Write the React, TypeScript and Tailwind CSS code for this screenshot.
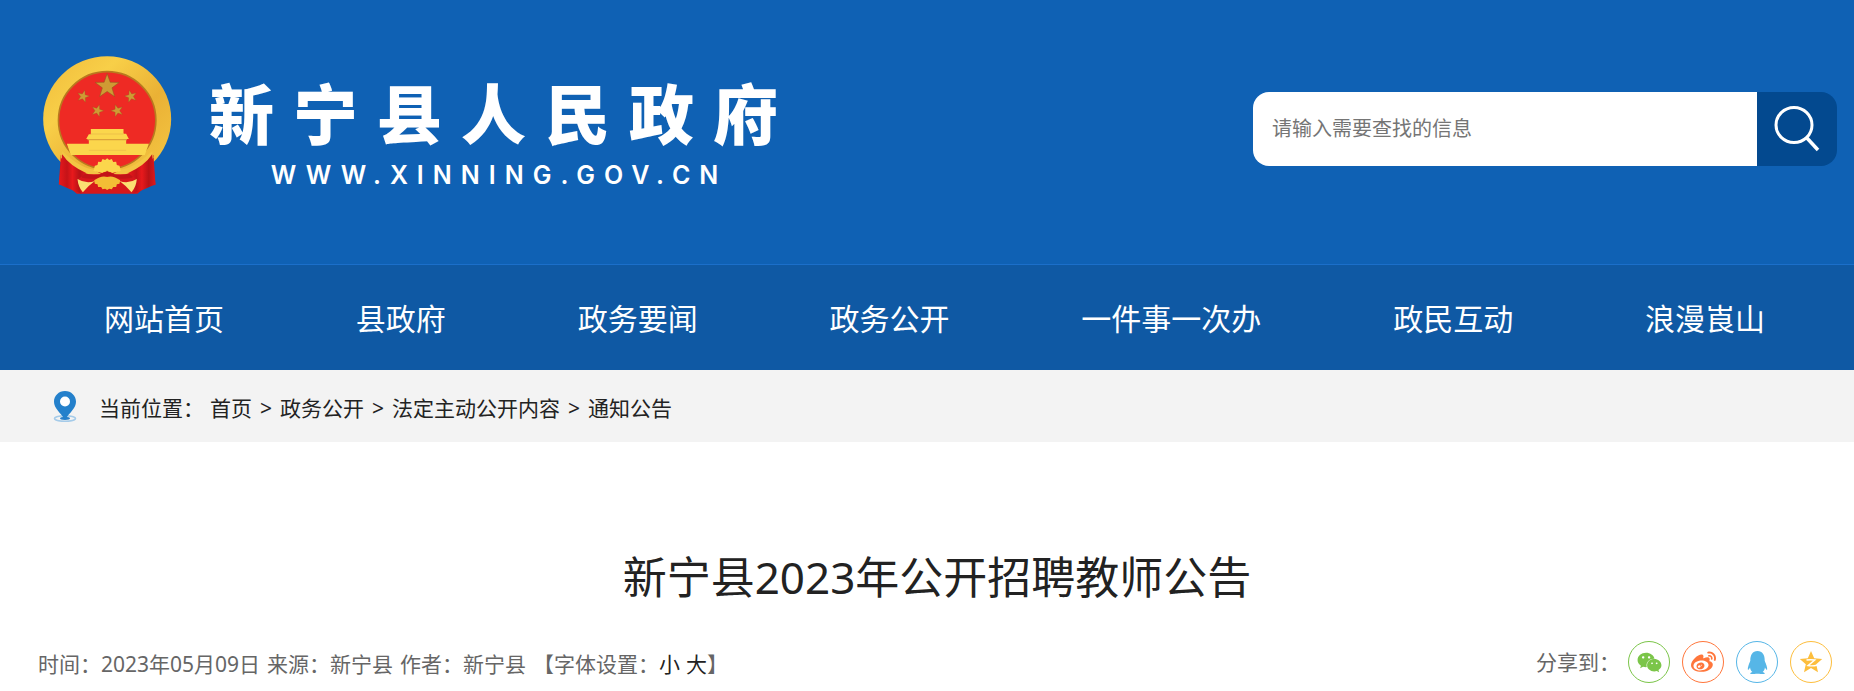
import { FaQq, FaWeibo, FaWeixin } from "react-icons/fa";

const NAV = ["网站首页", "县政府", "政务要闻", "政务公开", "一件事一次办", "政民互动", "浪漫崀山"];
const CRUMBS = ["首页", "政务公开", "法定主动公开内容", "通知公告"];

const STAR = "0,-10 2.4,-3.2 9.5,-3.1 3.8,1.2 5.9,8.1 0,4 -5.9,8.1 -3.8,1.2 -9.5,-3.1 -2.4,-3.2";

function Emblem() {
  return (
    <svg viewBox="36 44 392 420" className="w-[131px] h-[140px] shrink-0" role="img" aria-label="国徽">
      <defs>
        <linearGradient id="ring" x1="0" y1="0" x2="1" y2="1">
          <stop offset="0" stopColor="#f0bb3b" />
          <stop offset="0.3" stopColor="#f8cf48" />
          <stop offset="0.6" stopColor="#eab135" />
          <stop offset="1" stopColor="#f6ca45" />
        </linearGradient>
        <linearGradient id="drape" x1="0" x2="1">
          <stop offset="0" stopColor="#e8191c" />
          <stop offset="0.3" stopColor="#c51318" />
          <stop offset="0.5" stopColor="#e8191c" />
          <stop offset="0.75" stopColor="#b81216" />
          <stop offset="1" stopColor="#dd181c" />
        </linearGradient>
      </defs>
      <ellipse cx="231" cy="236" rx="192" ry="188" fill="url(#ring)" />
      <circle cx="231" cy="240" r="146" fill="#ee2a24" stroke="#b9791f" strokeWidth="5" />
      <g fill="#cf9a34" stroke="#8a5a1c" strokeWidth="0.4">
        <polygon points={STAR} transform="translate(231 138) scale(3.8)" />
        <polygon points={STAR} transform="translate(159 168) rotate(15) scale(1.9)" />
        <polygon points={STAR} transform="translate(302 168) rotate(-15) scale(1.9)" />
        <polygon points={STAR} transform="translate(202 211) rotate(18) scale(1.9)" />
        <polygon points={STAR} transform="translate(261 211) rotate(-18) scale(1.9)" />
      </g>
      {/* gate tower */}
      <path d="M182 266 h98 v14 h8 l8 16 h-8 v14 h68 l-12 34 H122 L110 310 h66 v-14 h-8 l8 -14 h6 Z" fill="#fbd64c" />
      <path d="M172 298 h118" stroke="#dca23a" strokeWidth="4" />
      <path d="M182 281 h98 M176 330 h112" stroke="#f2c74a" strokeWidth="4" />
      {/* base: upper gear, wheat stems, drapes, lower gear */}
      <path d="M92 344 Q150 392 231 396 Q312 392 370 344 L376 434 L350 436 L322 460 H140 L112 436 L86 432 Z" fill="#d6171b" />
      <path d="M96 332 Q150 384 192 388 L214 402 L176 402 Q124 388 92 352 Z M366 332 Q312 384 270 388 L248 402 L286 402 Q338 388 370 352 Z" fill="#f3c544" />
      <path d="M190 392 l4 -16 8 -2 2 -10 9 1 4 -9 8 3 6 -5 6 5 8 -3 4 9 9 -1 2 10 8 2 4 16 -26 6 -15 -8 -15 8 Z" fill="#fbd64c" />
      <path d="M150 396 Q200 414 231 392 Q262 414 312 396 L306 412 Q262 420 231 406 Q200 420 156 412 Z" fill="#c21418" />
      <path d="M192 420 Q214 404 231 410 Q248 404 270 420 L268 430 l-8 2 -2 8 -9 0 -4 7 -8 -2 -6 4 -6 -4 -8 2 -4 -7 -9 0 -2 -8 -8 -2 Z" fill="#f3bd35" />
      <path d="M96 342 Q118 376 168 398 L142 418 L154 460 L118 446 L86 432 Z" fill="url(#drape)" />
      <path d="M366 342 Q344 376 294 398 L320 418 L308 460 L344 446 L376 432 Z" fill="url(#drape)" />
      <path d="M142 416 Q168 432 194 422 Q172 438 158 456 Q144 440 142 416 Z M320 416 Q294 432 268 422 Q290 438 304 456 Q318 440 320 416 Z" fill="#fbdf72" />
    </svg>
  );
}

function PinIcon() {
  return (
    <svg viewBox="0 0 24 32" className="w-6 h-8 shrink-0" aria-hidden="true">
      <ellipse cx="12" cy="28.5" rx="10.5" ry="2.8" fill="none" stroke="#a5cbe9" strokeWidth="1.6" />
      <ellipse cx="12" cy="28.3" rx="5" ry="1.6" fill="#2a7fc9" />
      <path d="M12 1C5.7 1 1 5.8 1 11.8 1 18 7 22.5 12 29.5 17 22.5 23 18 23 11.8 23 5.8 18.3 1 12 1Z" fill="#2480cb" />
      <circle cx="12" cy="11.5" r="5" fill="#fff" />
    </svg>
  );
}

function QzoneIcon() {
  return (
    <svg viewBox="0 0 24 24" className="w-6 h-6" aria-hidden="true">
      <path d="M12 1l3.200 7.300 8 .7-6 5.300 1.800 8-7-4.200-7 4.200 1.800-8-6-5.300 8-.7z" fill="#fdbe3d" />
      <path d="M7.500 10q4-.6 8.300 0l-6.800 5.600q5 .8 9.500-.6" fill="none" stroke="#fff" strokeWidth="1.4" />
    </svg>
  );
}

export default function App() {
  return (
    <div className="bg-white text-[#222] font-['Noto_Sans','Noto_Sans_CJK_SC',sans-serif]">
      <header className="bg-[#0f61b4] h-[264px] pl-[42px] pr-[17px] pb-[6px] flex items-center justify-between">
        <a href="#" className="flex items-center gap-9 pb-2 text-white">
          <Emblem />
          <span className="flex flex-col items-center pt-4">
            <span className="font-['Noto_Sans_CJK_SC',sans-serif] font-black text-[65px] leading-[72px] tracking-[19px]">新宁县人民政府</span>
            <span className="font-['Inter','Liberation_Sans',sans-serif] font-semibold text-[25px] leading-8 tracking-[9px] mt-3 pr-2">WWW.XINNING.GOV.CN</span>
          </span>
        </a>
        <form className="flex w-[584px] h-[74px] rounded-2xl overflow-hidden" onSubmit={(e) => e.preventDefault()}>
          <input
            type="text"
            aria-label="搜索"
            placeholder="请输入需要查找的信息"
            className="flex-1 min-w-0 bg-white pl-[19px] text-xl outline-none placeholder:text-[#757575]"
          />
          <button type="submit" aria-label="搜索" className="w-20 bg-[#03498f] flex items-center justify-center">
            <svg viewBox="0 0 46 46" className="w-[46px] h-[46px]" fill="none" stroke="#fff" strokeWidth="3" aria-hidden="true">
              <ellipse cx="20" cy="19" rx="18" ry="17.5" />
              <path d="M32 31l12 13" strokeWidth="3.5" />
            </svg>
          </button>
        </form>
      </header>

      <nav className="bg-[#0f59a4] border-t border-[#1b6fca] h-[106px] pt-[2px] pl-[104px] pr-[89px] flex items-center justify-between text-white text-3xl">
        {NAV.map((item) => (
          <a key={item} href="#">{item}</a>
        ))}
      </nav>

      <div className="bg-[#f3f3f3] h-[72px] pl-[53px] flex items-center gap-[22px] text-[21px]">
        <PinIcon />
        <div className="flex items-center pt-[6px]">
          <span className="mr-[6px]">当前位置：</span>
          {CRUMBS.map((crumb, i) => (
            <span key={crumb}>
              {i > 0 && <span className="mx-2">&gt;</span>}
              <a href="#">{crumb}</a>
            </span>
          ))}
        </div>
      </div>

      <main className="pl-[38px] pr-[22px] pt-[102px]">
        <h1 className="pl-1 text-center text-[44px] leading-[66px]">新宁县2023年公开招聘教师公告</h1>
        <div className="flex items-center justify-between mt-[31px] pb-2 text-[21px] text-[#666]">
          <p className="flex gap-[7px] pt-[6px]">
            <span>时间：2023年05月09日</span>
            <span>来源：新宁县</span>
            <span>作者：新宁县</span>
            <span>
              【字体设置：
              <button type="button" className="text-[#222] mr-[6px]">小</button>
              <button type="button" className="text-[#222]">大</button>】
            </span>
          </p>
          <div className="flex items-center gap-3">
            <span className="-mr-1 pt-[2px]">分享到：</span>
            <a href="#" aria-label="微信" className="w-[42px] h-[42px] rounded-full border border-[#7bc549] text-[#7bc549] flex items-center justify-center">
              <FaWeixin size={25} />
            </a>
            <a href="#" aria-label="微博" className="w-[42px] h-[42px] rounded-full border border-[#ff763b] text-[#ff763b] flex items-center justify-center">
              <FaWeibo size={25} />
            </a>
            <a href="#" aria-label="QQ" className="w-[42px] h-[42px] rounded-full border border-[#56b6e7] text-[#56b6e7] flex items-center justify-center">
              <FaQq size={23} />
            </a>
            <a href="#" aria-label="QQ空间" className="w-[42px] h-[42px] rounded-full border border-[#fdbe3d] flex items-center justify-center">
              <QzoneIcon />
            </a>
          </div>
        </div>
      </main>
    </div>
  );
}
